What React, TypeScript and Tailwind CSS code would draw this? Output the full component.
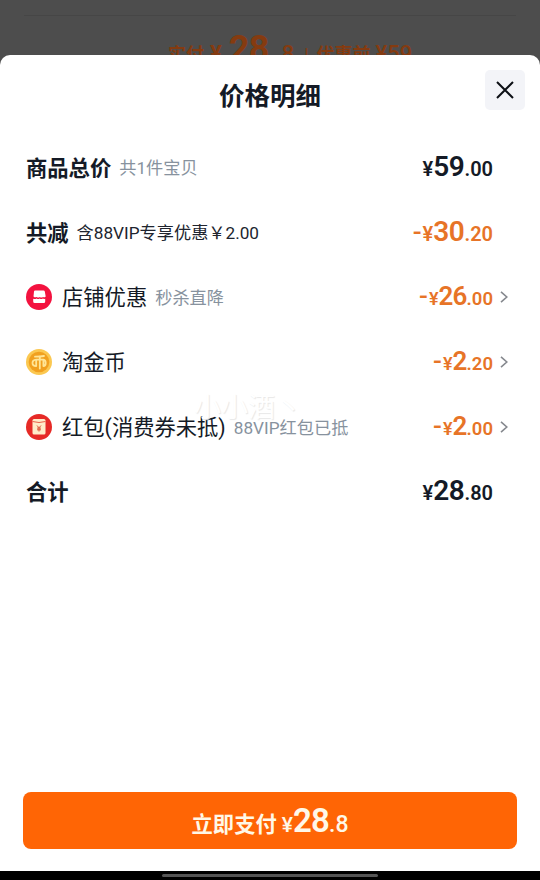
import React from 'react';

interface PriceProps {
  sign?: string;
  whole: string;
  cents: string;
  small?: boolean;
}

interface DetailRow {
  label: string;
  note?: string;
  noteClass?: string;
  icon?: React.ReactNode;
  price: PriceProps;
  discount?: boolean;
  link?: boolean;
}

const ShopIcon = () => (
  <svg viewBox="0 0 26 26" className="w-[26px] h-[26px] shrink-0">
    <circle cx="13" cy="13" r="13" fill="#f3123f" />
    <path d="M9 6.500h8.500q1 0 1.300 1l.900 5q-1.200 1.400-2.700.500-1.600 1.200-3.200 0-1.500 1.200-3.100 0-1.900.900-3.200-.500L8 7.500Q8.200 6.500 9 6.500Z" fill="#fff" />
    <path d="M7.200 14.800q1.900.700 3.400-.300 1.600 1 3.100 0 1.600 1 3.100 0 1 .700 2.400.300v2.700q0 1.500-1.500 1.500H8.700q-1.500 0-1.500-1.500Z" fill="#fff" />
  </svg>
);

const CoinIcon = () => (
  <svg viewBox="0 0 26 26" className="w-[26px] h-[26px] shrink-0">
    <circle cx="13" cy="13" r="13" fill="#fbc851" />
    <circle cx="13" cy="13" r="10.300" fill="#f1a01f" />
    <g fill="none" stroke="#ffe596" strokeWidth="1.800" strokeLinecap="round" strokeLinejoin="round">
      <path d="M9 7.700q4.500.100 9-.700" />
      <path d="M13.800 7.700V19.500" />
      <path d="M10.200 10.700q-3.700.300-3.700 3.300 0 3 3.700 3v-6.300h7.200q2.300.500 2.300 3.300 0 3-2.300 3v-6" />
    </g>
  </svg>
);

const RedPacketIcon = () => (
  <svg viewBox="0 0 26 26" className="w-[26px] h-[26px] shrink-0">
    <circle cx="13" cy="13" r="13" fill="#e62a26" />
    <rect x="6.500" y="5" width="13" height="15.500" rx="1.500" fill="#ffecc9" />
    <path d="M6.500 7.500q6.500 2 13 0" fill="none" stroke="#e9604a" strokeWidth="1" />
    <path d="M11 11.500l2 2.300 2-2.300M13 13.800v3.700M11 14.100h4M11 15.800h4" fill="none" stroke="#d84a30" strokeWidth="0.900" />
  </svg>
);

const ChevronIcon = () => (
  <svg viewBox="0 0 8 12" className="w-2 h-3" fill="none" stroke="#85888e" strokeWidth="1.600">
    <path d="M1 .800 6.800 6 1 11.200" />
  </svg>
);

const Price: React.FC<PriceProps> = ({ sign, whole, cents, small }) => (
  <span className={`flex items-baseline font-semibold leading-none ${small ? 'pb-px' : ''}`}>
    {sign && <span className="text-[26px] leading-none font-medium mr-px">{sign}</span>}
    <span className={small ? 'text-[18px]' : 'text-[20px]'}>¥</span>
    <span className={small ? 'text-[26px] tracking-[-0.8px]' : 'text-[28px] tracking-[-0.4px]'}>{whole}</span>
    <span className={small ? 'text-[18.500px]' : 'text-[20px]'}>.{cents}</span>
  </span>
);

const rows: DetailRow[] = [
  { label: '商品总价', note: '共1件宝贝', price: { whole: '59', cents: '00' } },
  {
    label: '共减',
    note: '含88VIP专享优惠￥2.00',
    noteClass: 'text-[#20242e]',
    price: { sign: '-', whole: '30', cents: '20' },
    discount: true,
  },
  { label: '店铺优惠', note: '秒杀直降', icon: <ShopIcon />, price: { sign: '-', whole: '26', cents: '00' }, discount: true, link: true },
  { label: '淘金币', icon: <CoinIcon />, price: { sign: '-', whole: '2', cents: '20' }, discount: true, link: true },
  {
    label: '红包(消费券未抵)',
    note: '88VIP红包已抵',
    icon: <RedPacketIcon />,
    price: { sign: '-', whole: '2', cents: '00' },
    discount: true,
    link: true,
  },
  { label: '合计', price: { whole: '28', cents: '80' } },
];

const DetailItem: React.FC<{ row: DetailRow }> = ({ row }) => (
  <li className="flex items-center h-[64.800px] pl-[26px] pr-8 whitespace-nowrap">
    {row.icon && <span className="mr-[10px]">{row.icon}</span>}
    <span className={`pt-[3px] text-[21.300px] leading-8 ${row.icon ? '' : 'font-bold'}`}>{row.label}</span>
    {row.note && (
      <span className={`ml-2 pt-0.5 text-[17.200px] leading-8 ${row.noteClass ?? 'text-[#87929e]'}`}>{row.note}</span>
    )}
    <div className={`ml-auto flex items-center ${row.discount ? 'text-[#e77427]' : ''}`}>
      <Price {...row.price} small={row.link} />
      <span className="w-[15px] flex justify-end">{row.link && <ChevronIcon />}</span>
    </div>
  </li>
);

export default function App() {
  return (
    <div className="w-[540px] h-[880px] flex flex-col overflow-hidden bg-[#4d4d4d] text-[#141a26] font-['Roboto','Noto_Sans_CJK_SC',sans-serif]">
      {/* dimmed order page behind the sheet */}
      <div className="h-[55px] shrink-0 overflow-hidden px-6 pt-[15px]">
        <div className="border-t border-[#464646]" />
        <div className="flex items-baseline pl-[144px] pt-[13px] text-[18px] leading-10 font-bold text-[#853b10] whitespace-nowrap">
          <span>实付</span>
          <span className="ml-1.5 text-[22px]">¥</span>
          <span className="ml-[7px] text-[36px] tracking-[-0.8px]">28</span>
          <span className="ml-[7px] text-[22px] font-medium">.8</span>
          <span className="ml-2.5 font-normal">|</span>
          <span className="ml-2">优惠前</span>
          <span className="ml-[5px] text-[22px] font-medium">¥59</span>
        </div>
      </div>

      <div className="relative flex-1 flex flex-col bg-white rounded-t-[10px]">
        <header className="grid grid-cols-[1fr_auto_1fr] items-start h-20 px-[15px] pt-[15px]">
          <h1 className="col-start-2 mt-[6px] text-[25.500px] leading-10 font-bold">价格明细</h1>
          <button className="justify-self-end w-10 h-10 flex items-center justify-center rounded-[5px] bg-[#f3f4f8]">
            <svg viewBox="0 0 18 18" className="w-[18px] h-[18px]" fill="none" stroke="#0d1016" strokeWidth="2">
              <path d="M1 1l16 16M17 1 1 17" />
            </svg>
          </button>
        </header>

        <ul>
          {rows.map((row) => (
            <DetailItem key={row.label} row={row} />
          ))}
        </ul>

        {/* account watermark */}
        <span className="absolute left-[194px] top-[337px] text-[27px] leading-8 text-white pointer-events-none [text-shadow:1px_1px_1px_#e8e8e8]">
          小小酒丶
        </span>

        <footer className="mt-auto px-[23px] pb-[22px]">
          <button className="w-full h-[57px] flex items-center justify-center rounded-lg bg-[#ff6505] text-[#fff8e8]">
            <span className="flex items-baseline font-bold leading-none">
              <span className="text-[21.300px]">立即支付</span>
              <span className="ml-[5px] text-[21px] font-medium">¥</span>
              <span className="text-[33px] tracking-[-0.800px] font-semibold">28</span>
              <span className="text-[23px] font-medium">.8</span>
            </span>
          </button>
        </footer>
      </div>

      {/* gesture bar */}
      <div className="h-[9px] shrink-0 flex justify-center items-center bg-black">
        <div className="w-[216px] h-[3px] rounded-full bg-[#555]" />
      </div>
    </div>
  );
}
